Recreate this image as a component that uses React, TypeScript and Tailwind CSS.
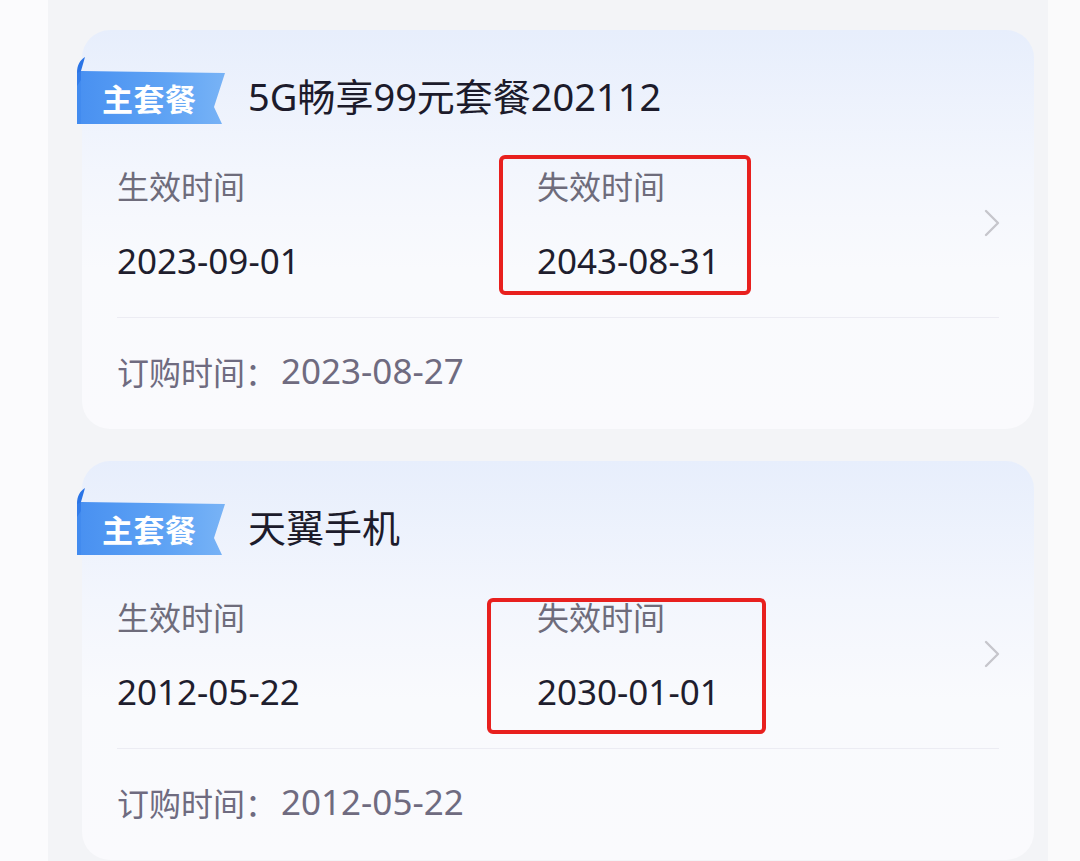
import React from "react";

type Pkg = {
  title: string;
  start: string;
  end: string;
  order: string;
  box: { left: number; top: number; width: number; height: number };
};

const pkgs: Pkg[] = [
  {
    title: "5G畅享99元套餐202112",
    start: "2023-09-01",
    end: "2043-08-31",
    order: "2023-08-27",
    box: { left: -38, top: -10, width: 252, height: 140 },
  },
  {
    title: "天翼手机",
    start: "2012-05-22",
    end: "2030-01-01",
    order: "2012-05-22",
    box: { left: -50, top: 2, width: 279, height: 136 },
  },
];

const latin = { fontFamily: '"Noto Sans", "Noto Sans CJK SC", sans-serif' };

function Ribbon() {
  return (
    <div className="relative w-[152px] h-[70px] shrink-0">
      <svg width="152" height="70" viewBox="0 0 152 70" className="absolute left-0 top-0">
        <defs>
          <linearGradient id="rb" x1="0" y1="0" x2="1" y2="0">
            <stop offset="0" stopColor="#4890f1" />
            <stop offset="0.6" stopColor="#5fa3f4" />
            <stop offset="1" stopColor="#78b3f6" />
          </linearGradient>
        </defs>
        <path d="M1 19 Q1 15 5 15 L149 17 L138 51 L146 68 L1 68 Z" fill="url(#rb)" />
        <path d="M9 1 C4 4 1 9 1 17 L1 30 L5 24 L5 15 Z" fill="#2a74e6" />
        <path d="M1 17 L5 15 L5 68 L1 68 Z" fill="#3b86ee" opacity="0.5" />
      </svg>
      <span className="absolute left-[26px] top-[22px] text-[31px] leading-[40px] font-bold text-white tracking-[0.5px]">
        主套餐
      </span>
    </div>
  );
}

function Chevron() {
  return (
    <svg width="18" height="28" viewBox="0 0 18 28" fill="none">
      <path d="M3 2 L15 14 L3 26" stroke="#c6c6cc" strokeWidth="2.4" strokeLinecap="round" strokeLinejoin="round" />
    </svg>
  );
}

function Card({ p }: { p: Pkg }) {
  return (
    <div className="rounded-[28px] bg-[linear-gradient(180deg,#e7eefc_0%,#f3f6fd_35%,#f9fafd_60%,#fafafd_100%)] pt-[26px] pb-[38px] px-[35px]">
      <div className="-ml-[41px] flex items-end">
        <Ribbon />
        <div className="ml-[20px] h-[54px] flex items-center pb-[6px] text-[38px] text-[#1c1b2b] leading-none" style={latin}>
          {p.title}
        </div>
      </div>
      <div className="flex items-center mt-[39px]">
        <div className="flex-1 flex">
          <div className="w-[420px]">
            <div className="text-[32px] leading-[40px] text-[#6e6c7b]">生效时间</div>
            <div className="mt-[36px] text-[35px] leading-[40px] text-[#1f1e2e]" style={latin}>{p.start}</div>
          </div>
          <div className="relative">
            <div className="text-[32px] leading-[40px] text-[#6e6c7b]">失效时间</div>
            <div className="mt-[36px] text-[35px] leading-[40px] text-[#1f1e2e]" style={latin}>{p.end}</div>
            <div
              className="absolute border-[4px] border-[#e8201e] rounded-[6px]"
              style={{ left: p.box.left, top: p.box.top, width: p.box.width, height: p.box.height }}
            />
          </div>
        </div>
        <div className="-mr-[2px]">
          <Chevron />
        </div>
      </div>
      <div className="mt-[36px] h-[1px] bg-[#ececf3]" />
      <div className="mt-[33px] flex items-center leading-[40px] text-[#6f6b80]">
        <span className="text-[32px]">订购时间：</span>
        <span className="ml-[4px] text-[35px]" style={latin}>{p.order}</span>
      </div>
    </div>
  );
}

export default function App() {
  return (
    <div
      className="w-[1080px] h-[861px] flex overflow-hidden bg-[#fbfbfd]"
      style={{ fontFamily: '"Noto Sans CJK SC", "Noto Sans", sans-serif' }}
    >
      <div className="w-[48px] bg-[#fbfbfd]" />
      <div className="w-[1000px] bg-[#f3f4f7] pl-[34px] pr-[14px] pt-[30px] flex flex-col gap-[32px]">
        {pkgs.map((p, i) => (
          <Card key={i} p={p} />
        ))}
      </div>
      <div className="flex-1 bg-[#fafafb]" />
    </div>
  );
}
